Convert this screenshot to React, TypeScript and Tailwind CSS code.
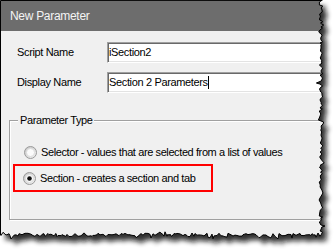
import React from "react";

const FONT = { fontFamily: '"Liberation Sans", Arial, sans-serif' };

// small deterministic generator so the torn edge looks the same on every run
function makeRng(seed: number) {
  let s = seed;
  return () => {
    s = (s * 1664525 + 1013904223) % 4294967296;
    return s / 4294967296;
  };
}

function tornPath() {
  const r = makeRng(7);
  const pts: string[] = ["0.5,0.5"];
  for (let y = 0; y <= 232; y += 1 + Math.floor(r() * 3)) {
    const bump = r() < 0.2 ? (r() - 0.5) * 6 : 0;
    pts.push(`${(321 + (r() - 0.5) * 3.5 + bump).toFixed(1)},${y}`);
  }
  for (let x = 321; x >= 0; x -= 1 + Math.floor(r() * 3)) {
    const bump = r() < 0.2 ? (r() - 0.5) * 6 : 0;
    pts.push(`${x},${(235 + (r() - 0.5) * 3.5 + bump).toFixed(1)}`);
  }
  pts.push("0.5,235");
  return "M" + pts.join(" L") + " Z";
}

function TornFrame() {
  const d = tornPath();
  return (
    <svg className="absolute inset-0 pointer-events-none" width="334" height="249">
      <defs>
        <mask id="outside">
          <rect width="334" height="249" fill="white" />
          <path d={d} fill="black" />
        </mask>
        <filter id="blur" x="-10%" y="-10%" width="120%" height="120%">
          <feGaussianBlur stdDeviation="2.6" />
        </filter>
      </defs>
      <g mask="url(#outside)">
        <rect width="334" height="249" fill="white" />
        <path d={d} transform="translate(5,6)" fill="#111" opacity="0.85" filter="url(#blur)" />
      </g>
      <path d={d} fill="none" stroke="#000" strokeWidth="1" />
    </svg>
  );
}

function Radio({ checked }: { checked?: boolean }) {
  return (
    <svg width="13" height="13" viewBox="0 0 13 13" className="shrink-0">
      <defs>
        <linearGradient id="ring" x1="0" y1="0" x2="1" y2="1">
          <stop offset="0" stopColor="#c4c4c4" />
          <stop offset="1" stopColor="#f4f4f4" />
        </linearGradient>
      </defs>
      <circle cx="6.5" cy="6.5" r="6" fill="url(#ring)" stroke="#9a9a9a" />
      <circle cx="6.5" cy="6.5" r="4" fill="#fbfbfb" stroke="#d8d8d8" strokeWidth="0.8" />
      {checked && <circle cx="6.5" cy="6.5" r="2.3" fill="#111" />}
    </svg>
  );
}

function Field({ label, value, caret }: { label: string; value: string; caret?: boolean }) {
  return (
    <div className="flex items-center h-[21px] tracking-[-0.35px]">
      <span className="w-[106px] pl-[16px] text-[11px] text-black">{label}</span>
      <div className="w-[240px] h-[21px] flex items-center pl-[1px] bg-white border border-[#a0a0a0] border-b-white border-r-white shadow-[inset_1px_1px_0_#696969,inset_0_-1px_0_#e3e3e3] text-[11px] text-black">
        <span>{value}</span>
        {caret && <span className="w-px h-[13px] bg-black" />}
      </div>
    </div>
  );
}

export default function App() {
  return (
    <div className="relative w-[334px] h-[249px] overflow-hidden bg-white" style={FONT}>
      <div className="w-[360px] h-[260px] bg-[#f0f0f0] border-l border-t border-black">
        <div className="h-[30px] bg-[#6d6d6d] flex items-center pl-[9px] text-[12px] tracking-[-0.3px] text-[#f4f4f4]">
          New Parameter
        </div>
        <div className="pt-[11px] flex flex-col">
          <Field label="Script Name" value="iSection2" />
          <div className="mt-[9px]">
            <Field label="Display Name" value="Section 2 Parameters" caret />
          </div>
          <div className="relative mt-[27px] ml-[8px] w-[330px] h-[100px] border border-[#a0a0a0] shadow-[1px_1px_0_white,inset_1px_1px_0_white] pt-[23px] pl-[3px] text-[11px] tracking-[-0.4px] text-black">
            <span className="absolute -top-[8px] left-[8px] px-[2px] bg-[#f0f0f0] leading-[14px]">
              Parameter Type
            </span>
            <div className="flex items-center gap-[4px] h-[16px] pl-[11px]">
              <Radio />
              <span>Selector - values that are selected from a list of values</span>
            </div>
            <div className="mt-[4px] w-[200px] h-[28px] border-2 border-[#ff0000] flex items-center gap-[4px] pl-[8px]">
              <Radio checked />
              <span>Section - creates a section and tab</span>
            </div>
          </div>
        </div>
      </div>
      <TornFrame />
    </div>
  );
}
